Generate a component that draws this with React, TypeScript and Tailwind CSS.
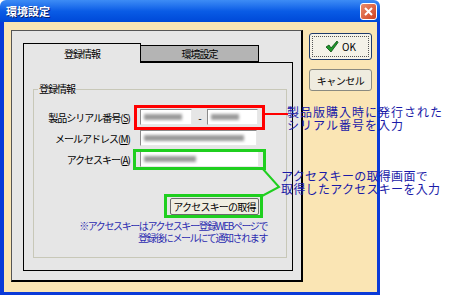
import React from "react";

function Blurred({ w }: { w: number }) {
  return <div className="h-[6px] bg-[#9a9a9a] blur-[1.5px]" style={{ width: w }} />;
}

function Field({ width, blur }: { width: string; blur: number }) {
  return (
    <div
      className={`${width} h-[16px] bg-white border border-t-[#8a8a8a] border-l-[#8a8a8a] border-r-[#e8e8e8] border-b-[#e8e8e8] flex items-center pl-[3px]`}
    >
      <Blurred w={blur} />
    </div>
  );
}

function Check() {
  return (
    <svg width="14" height="13" viewBox="0 0 14 13">
      <path d="M1 7 L4 5 L6 8 L12 1 L13 2.5 L6 12 Z" fill="#1f9a2a" stroke="#0b4a10" strokeWidth="0.8" />
    </svg>
  );
}

export default function App() {
  return (
    <div className="w-[450px] h-[295px] bg-white relative font-['Noto_Sans_CJK_JP',sans-serif] text-[10px] tracking-[-1px] text-black overflow-hidden whitespace-nowrap">
      <div className="w-[380px] h-[295px] flex flex-col">
        {/* title bar */}
        <div className="h-[22px] rounded-t-[6px] bg-gradient-to-b from-[#3d8cf5] via-[#0a5ce6] to-[#0048d8] flex items-center justify-between pl-[6px] pr-[3px]">
          <span className="text-white font-bold text-[11px] tracking-[0px] [text-shadow:1px_1px_0_#0a1f6b]">環境設定</span>
          <div className="w-[17px] h-[17px] rounded-[3px] border border-white bg-gradient-to-br from-[#e98a6a] to-[#d0401c] flex items-center justify-center">
            <svg width="9" height="9" viewBox="0 0 9 9">
              <path d="M1 1 L8 8 M8 1 L1 8" stroke="white" strokeWidth="2" />
            </svg>
          </div>
        </div>
        {/* body */}
        <div className="flex-1 bg-[#fae5b4] border-l-4 border-r-[3px] border-b-[3px] border-[#0a3ad8] flex pt-[8px] pl-[7px] pr-[5px] gap-[6px]">
          {/* main panel */}
          <div className="w-[292px] h-[252px] bg-[#e6e6e6] border border-[#555] border-r-2 border-b-2 border-r-black border-b-black pt-[12px] pl-[11px] pr-[8px] pb-[9px] flex flex-col">
            {/* tabs */}
            <div className="flex items-end h-[19px]">
              <div className="w-[118px] h-[20px] -mb-px bg-[#e6e6e6] border border-black border-b-0 flex items-center justify-center z-10">
                登録情報
              </div>
              <div className="w-[118px] h-[17px] bg-[#b4b4b4] border border-black border-l-0 flex items-center justify-center">
                環境設定
              </div>
            </div>
            {/* tab page */}
            <div className="flex-1 border border-black pl-[9px] pr-[5px] pt-[19px] pb-[12px] flex">
              <fieldset className="flex-1 border border-[#c8c8b8] px-0 pt-[13px] flex flex-col">
                <legend className="ml-[4px] px-[1px] leading-[14px]">登録情報</legend>
                <div className="flex items-center h-[16px]">
                  <div className="w-[96px] text-right">製品シリアル番号(<u>S</u>)</div>
                  <div className="ml-[10px] flex items-center">
                    <Field width="w-[52px]" blur={38} />
                    <span className="w-[15px] text-center">-</span>
                    <Field width="w-[51px]" blur={28} />
                  </div>
                </div>
                <div className="flex items-center h-[16px] mt-[5px]">
                  <div className="w-[96px] text-right">メールアドレス(<u>M</u>)</div>
                  <div className="ml-[10px]">
                    <Field width="w-[117px]" blur={100} />
                  </div>
                </div>
                <div className="flex items-center h-[16px] mt-[5px]">
                  <div className="w-[96px] text-right">アクセスキー(<u>A</u>)</div>
                  <div className="ml-[10px]">
                    <Field width="w-[119px]" blur={52} />
                  </div>
                </div>
                <div className="flex justify-end pr-[27px] mt-[31px]">
                  <button className="w-[89px] h-[17px] bg-[#f0eee2] border border-[#6c6c6c] rounded-[2px] text-[10px] tracking-[-0.8px] leading-none">
                    アクセスキーの取得
                  </button>
                </div>
                <div className="mt-[5px] pr-[19px] text-right text-[10px] leading-[12px] text-[#2b2bb0] tracking-[-1.4px]">
                  <div>※アクセスキーはアクセスキー登録WEBページで</div>
                  <div>登録後にメールにて通知されます</div>
                </div>
              </fieldset>
            </div>
          </div>
          {/* buttons */}
          <div className="flex flex-col gap-[9px] pt-[3px]">
            <button className="w-[63px] h-[27px] bg-[#f4f2e8] border border-[#1e3a6c] rounded-[3px] p-[2px] tracking-[0px]">
              <div className="w-full h-full border border-dotted border-[#555] flex items-center justify-center gap-[3px]">
                <Check />
                <span>OK</span>
              </div>
            </button>
            <button className="w-[63px] h-[22px] bg-[#efece0] border border-[#8a8a80] rounded-[3px] tracking-[-0.5px]">キャンセル</button>
          </div>
        </div>
      </div>

      {/* annotations */}
      <div className="absolute left-[134px] top-[105px] w-[131px] h-[25px] border-[3px] border-[#ff0000]" />
      <div className="absolute left-[265px] top-[113px] w-[23px] h-[2px] bg-[#ff0000]" />
      <div className="absolute left-[133px] top-[149px] w-[133px] h-[21px] border-[3px] border-[#1fcf1f]" />
      <div className="absolute left-[164px] top-[194px] w-[99px] h-[24px] border-[3px] border-[#1fcf1f]" />
      <svg className="absolute left-0 top-0" width="450" height="295">
        <path d="M262 168 L279 187 L262 196" fill="none" stroke="#1fcf1f" strokeWidth="2" />
      </svg>
      <div className="absolute left-[287px] top-[105px] text-[12px] leading-[13px] tracking-[1px] text-[#1a1aa8]">
        <div>製品版購入時に発行された</div>
        <div>シリアル番号を入力</div>
      </div>
      <div className="absolute left-[281px] top-[169px] text-[12px] leading-[13px] tracking-[0.3px] text-[#1a1aa8]">
        <div>アクセスキーの取得画面で</div>
        <div>取得したアクセスキーを入力</div>
      </div>
    </div>
  );
}
